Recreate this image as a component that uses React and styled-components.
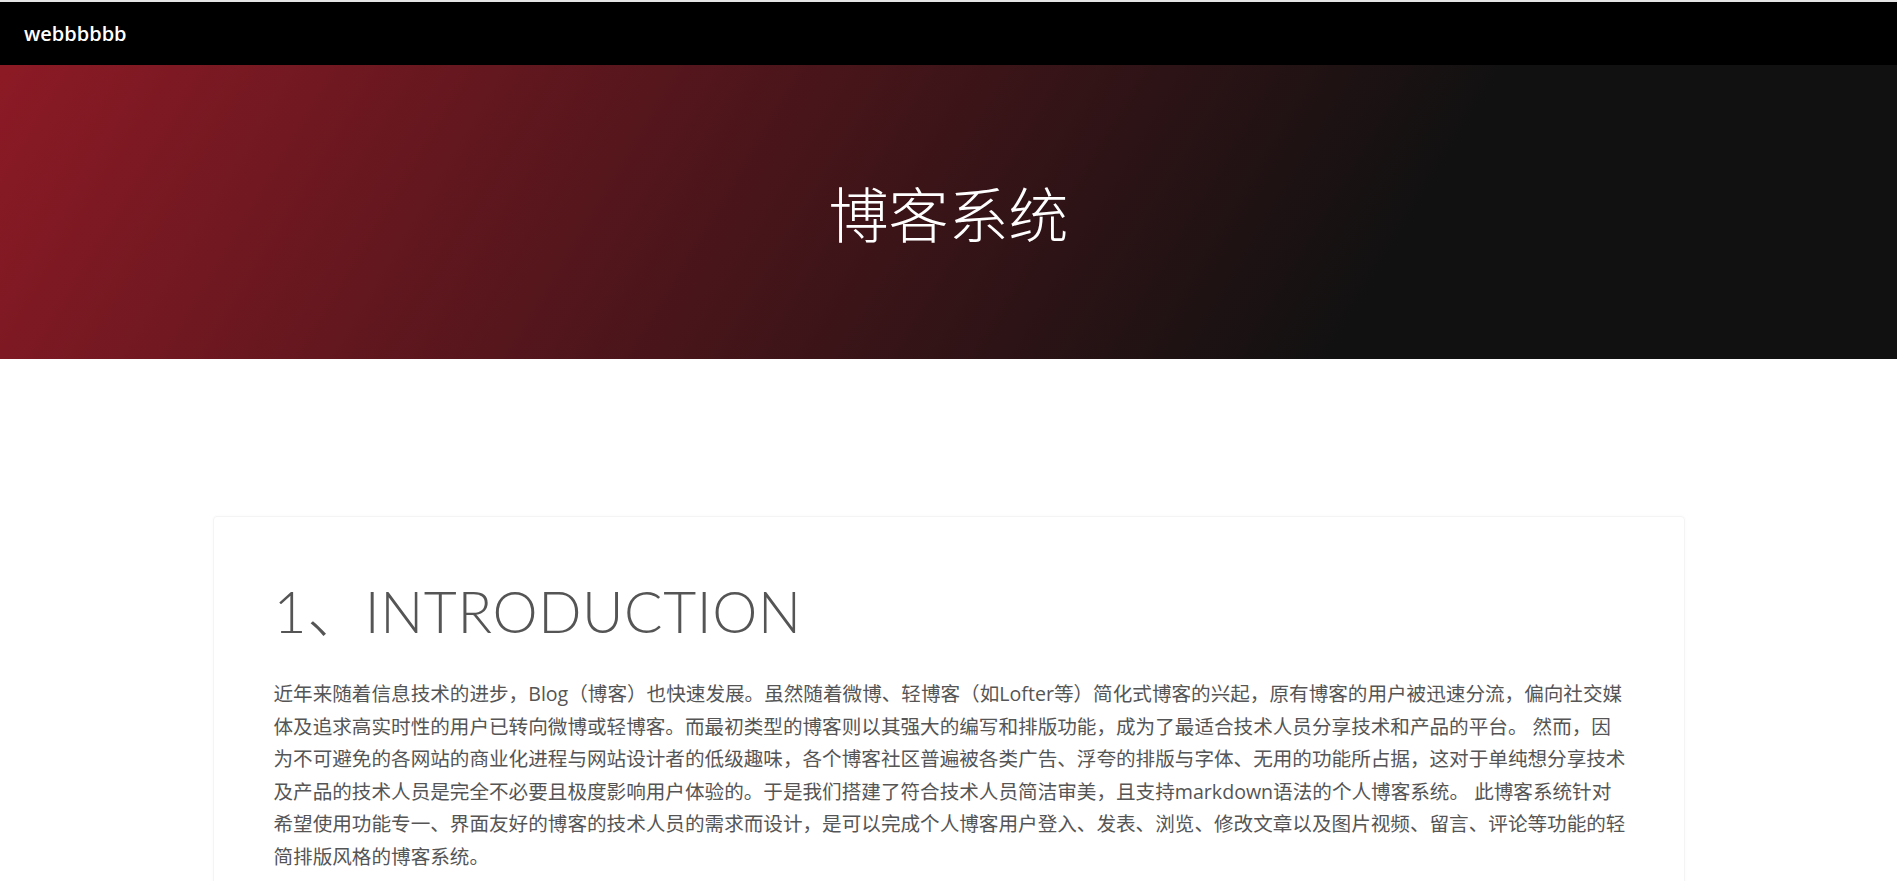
import React from "react";
import styled, { createGlobalStyle } from "styled-components";

const GlobalStyle = createGlobalStyle`
  html, body {
    margin: 0;
    padding: 0;
    background: #fff;
  }
  body {
    font-family: "Lato", "Noto Sans CJK SC", sans-serif;
  }
`;

const intro =
  "近年来随着信息技术的进步，Blog（博客）也快速发展。虽然随着微博、轻博客（如Lofter等）简化式博客的兴起，原有博客的用户被迅速分流，偏向社交媒体及追求高实时性的用户已转向微博或轻博客。而最初类型的博客则以其强大的编写和排版功能，成为了最适合技术人员分享技术和产品的平台。 然而，因为不可避免的各网站的商业化进程与网站设计者的低级趣味，各个博客社区普遍被各类广告、浮夸的排版与字体、无用的功能所占据，这对于单纯想分享技术及产品的技术人员是完全不必要且极度影响用户体验的。于是我们搭建了符合技术人员简洁审美，且支持markdown语法的个人博客系统。 此博客系统针对希望使用功能专一、界面友好的博客的技术人员的需求而设计，是可以完成个人博客用户登入、发表、浏览、修改文章以及图片视频、留言、评论等功能的轻简排版风格的博客系统。";

const App = () => {
  return (
    <>
      <GlobalStyle />
      <Navbar>
        <Brand>webbbbbb</Brand>
      </Navbar>

      <Hero>
        <HeroTitle>博客系统</HeroTitle>
      </Hero>

      <Main>
        <Card>
          <SectionTitle>1、INTRODUCTION</SectionTitle>
          <Paragraph>{intro}</Paragraph>
        </Card>
      </Main>
    </>
  );
};

const Navbar = styled.nav`
  height: 63px;
  border-top: 2px solid #e4e4e4;
  background: #000;
  display: flex;
  align-items: center;
  padding: 0 24px;
`;

const Brand = styled.a`
  color: #fff;
  font-family: "Open Sans", sans-serif;
  font-size: 20px;
  font-weight: 600;
  cursor: pointer;
`;

const Hero = styled.header`
  height: 294px;
  background: linear-gradient(121deg, #8c1a25 0%, #111111 73%);
  display: flex;
  align-items: center;
  justify-content: center;
`;

const HeroTitle = styled.h1`
  margin: 0;
  color: #fff;
  font-family: "Noto Sans CJK SC", sans-serif;
  font-size: 60px;
  font-weight: 300;
  line-height: 1;
`;

const Main = styled.main`
  padding: 157px 0 60px;
`;

const Card = styled.section`
  max-width: 1472px;
  margin: 0 auto;
  box-sizing: border-box;
  border: 1px solid #f4f4f4;
  border-radius: 4px;
  box-shadow: 0 0 3px rgba(0, 0, 0, 0.03);
  padding: 60px 56px 40px 60px;
`;

const SectionTitle = styled.h2`
  margin: 0 0 33px;
  color: #555;
  font-family: "Lato", "Noto Sans CJK SC", sans-serif;
  font-size: 57px;
  font-weight: 300;
  letter-spacing: 0.6px;
  line-height: 1.2;
`;

const Paragraph = styled.p`
  margin: 0;
  color: #555;
  font-family: "Open Sans", "Noto Sans CJK SC", sans-serif;
  font-size: 19.6px;
  line-height: 32.5px;
`;

export default App;
